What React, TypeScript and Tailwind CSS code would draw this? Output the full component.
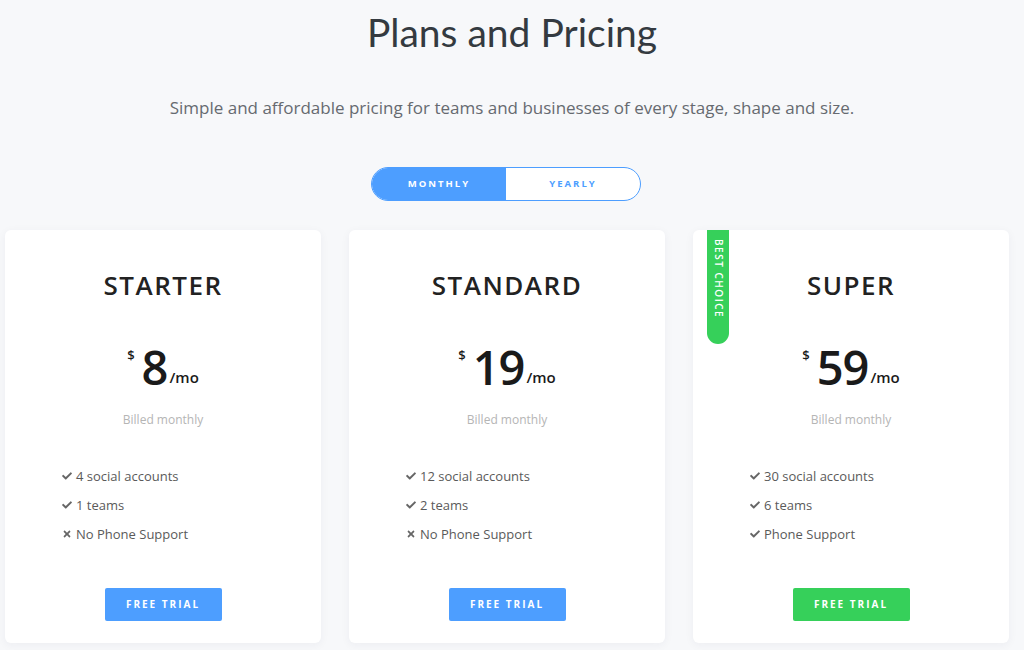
import React, { useState } from 'react';
import { FaCheck, FaTimes } from 'react-icons/fa';

type Plan = {
  name: string;
  price: string;
  features: { text: string; ok: boolean }[];
  accent: 'blue' | 'green';
  badge?: boolean;
};

const PLANS: Plan[] = [
  {
    name: 'STARTER',
    price: '8',
    accent: 'blue',
    features: [
      { text: '4 social accounts', ok: true },
      { text: '1 teams', ok: true },
      { text: 'No Phone Support', ok: false },
    ],
  },
  {
    name: 'STANDARD',
    price: '19',
    accent: 'blue',
    features: [
      { text: '12 social accounts', ok: true },
      { text: '2 teams', ok: true },
      { text: 'No Phone Support', ok: false },
    ],
  },
  {
    name: 'SUPER',
    price: '59',
    accent: 'green',
    badge: true,
    features: [
      { text: '30 social accounts', ok: true },
      { text: '6 teams', ok: true },
      { text: 'Phone Support', ok: true },
    ],
  },
];

export default function App() {
  const [billing, setBilling] = useState<'monthly' | 'yearly'>('monthly');

  return (
    <div className="min-h-[650px] bg-[#f7f8fa] font-['Open_Sans',sans-serif] overflow-hidden">
      <h1 className="pt-[7px] text-center font-['Lato',sans-serif] text-[39px] leading-[50px] text-[#343a40]">
        Plans and Pricing
      </h1>
      <p className="mt-[40px] text-center text-[17px] leading-[22px] text-[#666a70]">
        Simple and affordable pricing for teams and businesses of every stage, shape and size.
      </p>

      <div className="mt-[48px] flex justify-center">
        <div className="ml-[-12px] flex h-[34px] w-[270px] overflow-hidden rounded-full border border-[#4d9eff] bg-white">
          <button
            onClick={() => setBilling('monthly')}
            className={`flex-1 text-[9.5px] font-bold tracking-[2px] ${
              billing === 'monthly' ? 'bg-[#4d9eff] text-white' : 'text-[#4d9eff]'
            }`}
          >
            MONTHLY
          </button>
          <button
            onClick={() => setBilling('yearly')}
            className={`flex-1 text-[9.5px] font-bold tracking-[2px] ${
              billing === 'yearly' ? 'bg-[#4d9eff] text-white' : 'text-[#4d9eff]'
            }`}
          >
            YEARLY
          </button>
        </div>
      </div>

      <div className="mt-[29px] ml-[5px] flex gap-[28px]">
        {PLANS.map(p => (
          <PlanCard key={p.name} plan={p} />
        ))}
      </div>
    </div>
  );
}

function PlanCard({ plan }: { plan: Plan }) {
  return (
    <div className="relative flex h-[413px] w-[316px] shrink-0 flex-col items-center rounded-[6px] bg-white shadow-[0_2px_10px_rgba(30,40,80,0.05)]">
      {plan.badge && (
        <div className="absolute left-[14px] top-0 flex h-[114px] w-[22px] justify-center rounded-b-full bg-[#36d05a] pt-[9px]">
          <span className="text-[10px] font-semibold tracking-[1.5px] text-white [writing-mode:vertical-rl]">
            BEST CHOICE
          </span>
        </div>
      )}
      <h2 className="mt-[38px] text-[26px] font-semibold leading-[34px] tracking-[1.5px] text-[#222]">
        {plan.name}
      </h2>
      <div className="mt-[37px] flex items-start text-[#1a1a1a]">
        <span className="mt-[7px] mr-[7px] text-[13px] font-semibold">$</span>
        <span className="text-[47px] font-semibold leading-[56px] tracking-[-1px]">{plan.price}</span>
        <span className="mt-[27px] ml-[2px] text-[15px] font-semibold">/mo</span>
      </div>
      <div className="mt-[16px] text-[12px] text-[#b5b5b5]">Billed monthly</div>

      <ul className="mt-[38px] flex w-full flex-col gap-[11px] pl-[57px]">
        {plan.features.map(f => (
          <li key={f.text} className="flex items-center gap-[4px] text-[13px] leading-[18px] text-[#5a5a5a]">
            {f.ok ? (
              <FaCheck className="h-[10px] w-[10px] text-[#666]" />
            ) : (
              <FaTimes className="h-[10px] w-[10px] text-[#666]" />
            )}
            {f.text}
          </li>
        ))}
      </ul>

      <button
        className={`mt-[45px] h-[33px] w-[117px] rounded-[2px] text-[10px] font-bold tracking-[2px] text-white ${
          plan.accent === 'green' ? 'bg-[#36d05a]' : 'bg-[#4d9eff]'
        }`}
      >
        FREE TRIAL
      </button>
    </div>
  );
}
